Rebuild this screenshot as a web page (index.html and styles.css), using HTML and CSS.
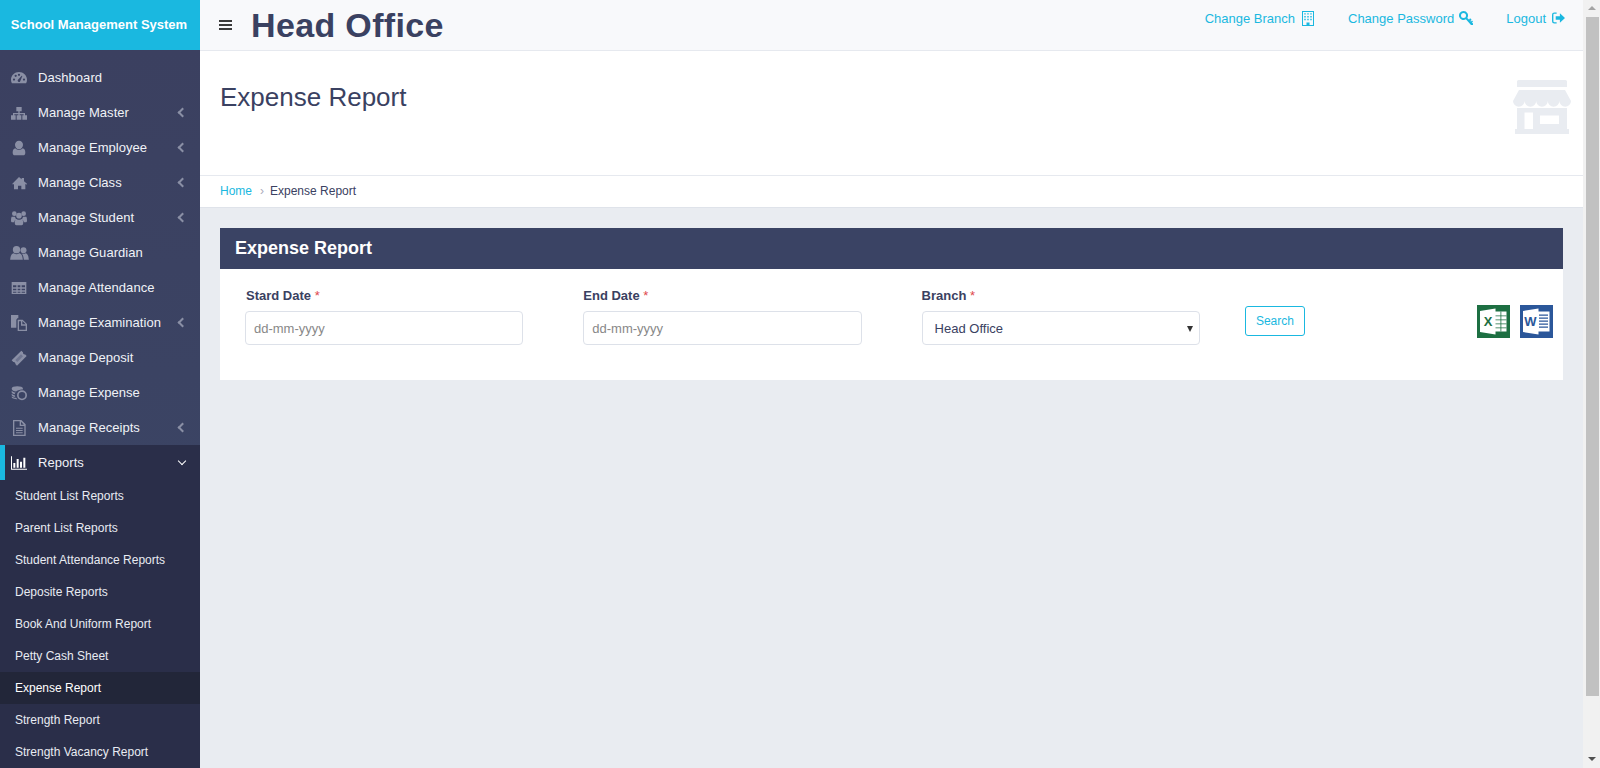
FILE: index.html
```html
<!DOCTYPE html>
<html lang="en">
<head>
    <meta charset="UTF-8">
    <meta name="viewport" content="width=device-width, initial-scale=1.0">
    <title>Expense Report</title>
    <link rel="stylesheet" href="styles.css">
</head>
<body>
    <aside class="sidebar">
        <div class="logo">School Management System</div>
        <ul class="menu">
            <li class="menu-item">
                <svg class="menu-icon" viewBox="0 0 24 24"><path fill-rule="evenodd" d="M12 3C5.600 3 0 8 0 14.500c0 2 .5 3.800 1.400 5.200.2.300.5.300.8.300h19.600c.3 0 .6 0 .8-.3.900-1.400 1.400-3.200 1.400-5.200C24 8 18.400 3 12 3zM4.500 16a1.700 1.700 0 1 1 0-3.400 1.700 1.700 0 0 1 0 3.400zm2.500-5.500a1.700 1.700 0 1 1 0-3.400 1.700 1.700 0 0 1 0 3.400zM12 9a1.700 1.700 0 1 1 0-3.400A1.700 1.700 0 0 1 12 9zm1.500 8.500a2.200 2.200 0 0 1-3.400-2.400l6-6.500.9.500zM19.500 16a1.700 1.700 0 1 1 0-3.400 1.700 1.700 0 0 1 0 3.400z"/></svg>
                <span class="menu-text">Dashboard</span>
            </li>
            <li class="menu-item">
                <svg class="menu-icon" viewBox="0 0 24 24"><path d="M8 3h8v6.500H8zM0 15.500h7V22H0zM8.500 15.500h7V22h-7zM17 15.500h7V22h-7zM11 9h2v3h8v4h-2v-2h-6v2h-2v-2H5v2H3v-4h8z"/></svg>
                <span class="menu-text">Manage Master</span>
                <span class="angle-left"></span>
            </li>
            <li class="menu-item">
                <svg class="menu-icon" viewBox="0 0 24 24"><path d="M12 1a6 6 0 0 1 6 6.500c0 3.300-2.700 6.500-6 6.500s-6-3.200-6-6.500A6 6 0 0 1 12 1zM6.500 12.500C8 14 10 15 12 15s4-1 5.500-2.500c2.500.3 4 2.500 4 6.500 0 2.500-1.300 4-3.300 4H5.800c-2 0-3.300-1.500-3.300-4 0-4 1.500-6.200 4-6.500z"/></svg>
                <span class="menu-text">Manage Employee</span>
                <span class="angle-left"></span>
            </li>
            <li class="menu-item">
                <svg class="menu-icon" viewBox="0 0 24 24"><path d="M12 3l4 3.500V4.500h3.500v5l4.500 3.800-1 1.200-1.500-1.200V21.500h-6v-5.500h-5v5.500h-6V13.300L3 14.500l-1-1.200z"/></svg>
                <span class="menu-text">Manage Class</span>
                <span class="angle-left"></span>
            </li>
            <li class="menu-item">
                <svg class="menu-icon" viewBox="0 0 24 24"><circle cx="5" cy="5.500" r="3.500"/><circle cx="19" cy="5.500" r="3.500"/><circle cx="12" cy="8.500" r="4.200"/><path d="M1 10h5c.3 1.800 1 3 2 4C6 15 5 16.500 5 18.500H2c-1 0-2-.8-2-2.300 0-2.500.2-5.200 1-6.200zM23 10h-5c-.3 1.800-1 3-2 4 2 1 3 2.500 3 4.500h3c1 0 2-.8 2-2.300 0-2.500-.2-5.200-1-6.200zM8.500 13.500c1 .9 2.200 1.300 3.500 1.300s2.500-.4 3.500-1.300c2.300.3 2.800 3.500 2.800 6.500 0 1.500-1 3-2.500 3H8.200c-1.500 0-2.500-1.500-2.500-3 0-3 .5-6.200 2.800-6.500z"/></svg>
                <span class="menu-text">Manage Student</span>
                <span class="angle-left"></span>
            </li>
            <li class="menu-item">
                <svg class="menu-icon menu-icon-wide" viewBox="0 0 28 24"><circle cx="9.500" cy="7" r="5.500"/><circle cx="20" cy="8" r="4.500"/><path d="M5.500 12.500c1 .9 2.500 1.500 4 1.500s3-.6 4-1.500c3 .3 5 3 5.500 9.500H0c.5-6.500 2.500-9.200 5.500-9.500zM17 12.300c.9.600 2 .9 3 .9s2.100-.3 3-.9c2.800.4 4.500 3.300 5 9.700h-7.500c-.3-4-1.500-7.700-3.500-9.700z"/></svg>
                <span class="menu-text">Manage Guardian</span>
            </li>
            <li class="menu-item">
                <svg class="menu-icon" viewBox="0 0 24 24"><path fill-rule="evenodd" d="M1 3h22v18H1zM3 8v3h5V8zm7 0v3h4V8zm6 0v3h5V8zM3 13v2.500h5V13zm7 0v2.500h4V13zm6 0v2.500h5V13zM3 17.500V19h5v-1.500zm7 0V19h4v-1.500zm6 0V19h5v-1.500z"/></svg>
                <span class="menu-text">Manage Attendance</span>
            </li>
            <li class="menu-item">
                <svg class="menu-icon" viewBox="0 0 24 24"><path fill-rule="evenodd" d="M0 0h11v5H9.500L8 7V19H0zM10 7h7.500l6.500 6.500V24H10zM17 9v5h5zM12 9.500V22h10v-6h-7V9.500z"/></svg>
                <span class="menu-text">Manage Examination</span>
                <span class="angle-left"></span>
            </li>
            <li class="menu-item">
                <svg class="menu-icon" viewBox="0 0 24 24"><path d="M15.500 1l2.500 2.500a2.500 2.500 0 0 0 3 3L23.500 9 9 23.500 6.500 21a2.500 2.500 0 0 0-3-3L1 15.500z"/><path class="ticket-band" d="M15 6.500l-8.500 8.500 3 3 8.500-8.500z"/></svg>
                <span class="menu-text">Manage Deposit</span>
            </li>
            <li class="menu-item">
                <svg class="menu-icon" viewBox="0 0 24 24"><path fill-rule="evenodd" d="M9.500 2C14 2 18 3.200 18 5.500c0 .5-.2.900-.5 1.300-3.500-.5-8 1.200-9.800 3C4.500 9.500 1 8 1 5.500 1 3.200 5 2 9.500 2zM1 8.500c1.500 1.600 4 2.500 6 2.800-.7.800-1.200 1.700-1.300 2.600-2-.3-4.700-1.300-4.700-3zM1 13c1 1.200 3 2 4.600 2.300.1 1 .4 1.800.9 2.700C3.800 17.800 1 17 1 15zM1 17.300c1.200 1 3.500 1.800 6.500 2 .7.800 1.500 1.500 2.300 2-.1 0-.2 0-.3 0C5 21.300 1 20 1 18zM16.500 8a7.500 7.500 0 1 1 0 15 7.500 7.500 0 0 1 0-15zm0 2.500a5 5 0 1 0 0 10 5 5 0 0 0 0-10z"/></svg>
                <span class="menu-text">Manage Expense</span>
            </li>
            <li class="menu-item">
                <svg class="menu-icon" viewBox="0 0 24 24"><path fill-rule="evenodd" d="M3 0h12.500L22 6.500V24H3zM5 2v20h15V9h-7V2zm10 .8V7h4.200zM7.500 11.500h10V13h-10zM7.500 15h10v1.500h-10zM7.500 18.500h10V20h-10z"/></svg>
                <span class="menu-text">Manage Receipts</span>
                <span class="angle-left"></span>
            </li>
            <li class="menu-item menu-item-open">
                <svg class="menu-icon menu-icon-active" viewBox="0 0 24 24"><path d="M0 2h1.500v18.500H24V22H0zM3.500 12h3v7h-3zM8.500 6h3v13h-3zM13.500 10h3v9h-3zM18.500 4h3v15h-3z"/></svg>
                <span class="menu-text">Reports</span>
                <span class="angle-down"></span>
            </li>
        </ul>
        <ul class="submenu">
            <li class="submenu-item">Student List Reports</li>
            <li class="submenu-item">Parent List Reports</li>
            <li class="submenu-item">Student Attendance Reports</li>
            <li class="submenu-item">Deposite Reports</li>
            <li class="submenu-item">Book And Uniform Report</li>
            <li class="submenu-item">Petty Cash Sheet</li>
            <li class="submenu-item submenu-item-active">Expense Report</li>
            <li class="submenu-item">Strength Report</li>
            <li class="submenu-item">Strength Vacancy Report</li>
        </ul>
    </aside>

    <div class="main">
        <header class="topbar">
            <div class="hamburger"><span></span><span></span><span></span></div>
            <div class="branch-name">Head Office</div>
            <nav class="top-links">
                <a class="top-link top-link-branch">Change Branch
                    <svg class="top-icon icon-building" viewBox="0 0 12 15"><path fill-rule="evenodd" d="M0 0h12v15H0zM1 1v13h3.500v-2.500h3V14H11V1zM2.300 2.200h1.400v1.400H2.300zm3 0h1.400v1.400H5.300zm3 0h1.400v1.400H8.300zM2.300 5h1.400v1.400H2.300zm3 0h1.400v1.400H5.300zm3 0h1.400v1.400H8.300zM2.300 7.800h1.400v1.400H2.300zm3 0h1.400v1.400H5.300zm3 0h1.400v1.400H8.300z"/></svg>
                </a>
                <a class="top-link top-link-password">Change Password
                    <svg class="top-icon icon-key" viewBox="0 0 14 14"><path fill-rule="evenodd" d="M4.500 0a4.500 4.500 0 0 1 3.800 6.900L14 12.600V14h-2L6.900 8.300A4.500 4.500 0 1 1 4.500 0zm0 2a2.500 2.500 0 1 0 0 5 2.500 2.500 0 0 0 0-5zM10 8.500l1.200-1.200 1.400 1.400-1.200 1.200zM12 10.500l1-1 1 1-1 1z"/></svg>
                </a>
                <a class="top-link top-link-logout">Logout
                    <svg class="top-icon icon-logout" viewBox="0 0 14 12"><path d="M5 0v1.500H2.500C2 1.500 1.500 2 1.500 2.500v7c0 .5.5 1 1 1H5V12H2.500A2.500 2.500 0 0 1 0 9.500v-7A2.500 2.500 0 0 1 2.500 0zM8.500 1L14 6l-5.500 5V8H4V4h4.500z"/></svg>
                </a>
            </nav>
        </header>

        <section class="page-head">
            <h1 class="page-title">Expense Report</h1>
            <svg class="store-icon" viewBox="0 0 58 54"><path fill-rule="evenodd" d="M5.500 0h47A1.500 1.500 0 0 1 54 1.500V7H4V1.500A1.500 1.500 0 0 1 5.500 0zM6 10h46l6 11a5.800 5.800 0 0 1-11.600 0 5.800 5.800 0 0 1-11.600 0 5.800 5.800 0 0 1-11.600 0 5.800 5.800 0 0 1-11.600 0A5.800 5.800 0 0 1 0 21zM4 28h50v21h2v5H2v-5h2zM11.500 32.500V49H20V32.500zM27 35.500V44h19v-8.500z"/></svg>
        </section>

        <div class="breadcrumb">
            <a class="crumb-link">Home</a>
            <span class="crumb-sep">›</span>
            <span class="crumb-current">Expense Report</span>
        </div>

        <div class="content">
            <div class="card">
                <div class="card-header">Expense Report</div>
                <div class="card-body">
                    <div class="field">
                        <label class="field-label">Stard Date <span class="required">*</span></label>
                        <input class="field-input" type="text" placeholder="dd-mm-yyyy">
                    </div>
                    <div class="field">
                        <label class="field-label">End Date <span class="required">*</span></label>
                        <input class="field-input" type="text" placeholder="dd-mm-yyyy">
                    </div>
                    <div class="field">
                        <label class="field-label">Branch <span class="required">*</span></label>
                        <div class="select-wrap">
                            <select class="field-input field-select">
                                <option>Head Office</option>
                            </select>
                        </div>
                    </div>
                    <button class="search-btn">Search</button>
                    <div class="export-icons">
                        <svg class="export-icon" viewBox="0 0 33 33">
                            <rect width="33" height="33" fill="#1d6f42"/>
                            <path d="M18 6.500h11.500v20H18z" fill="#fff"/>
                            <path d="M18 10.500h11.500v.8H18zM18 14.500h11.500v.8H18zM18 18.500h11.500v.8H18zM18 22.500h11.500v.8H18zM23.500 6.500h.8v20h-.8z" fill="#1d6f42"/>
                            <path d="M3 6L18.500 3.500v26L3 27z" fill="#fff"/>
                            <text x="11" y="21" class="export-letter" fill="#1d6f42">X</text>
                        </svg>
                        <svg class="export-icon" viewBox="0 0 33 33">
                            <rect width="33" height="33" fill="#2b579a"/>
                            <path d="M18 6.500h11.500v20H18z" fill="#fff"/>
                            <path d="M19 9.500h9v1.300h-9zM19 12.500h9v1.300h-9zM19 15.500h9v1.300h-9zM19 18.500h9v1.300h-9zM19 21.500h9v1.300h-9z" fill="#2b579a"/>
                            <path d="M3 6L18.500 3.500v26L3 27z" fill="#fff"/>
                            <text x="10.500" y="21" class="export-letter" fill="#2b579a">W</text>
                        </svg>
                    </div>
                </div>
            </div>
        </div>
    </div>

    <div class="scrollbar">
        <span class="scroll-up"></span>
        <div class="scroll-thumb"></div>
        <span class="scroll-down"></span>
    </div>
</body>
</html>
```

FILE: styles.css
```css
html {
    overflow: hidden;
}
body {
    margin: 0;
    display: flex;
    height: 768px;
    overflow: hidden;
    font-family: "Liberation Sans", Arial, sans-serif;
    font-size: 13px;
    color: #3a4161;
    background: #e9ecf1;
}
ul {
    list-style: none;
    margin: 0;
    padding: 0;
}

/* sidebar */
.sidebar {
    width: 200px;
    flex-shrink: 0;
    background: #2a2e49;
}
.logo {
    height: 50px;
    line-height: 50px;
    padding-right: 2px;
    box-sizing: border-box;
    background: #1ab8e0;
    color: #fff;
    font-size: 13px;
    font-weight: bold;
    text-align: center;
}
.menu {
    padding-top: 10px;
    background: linear-gradient(#3b4060, #3b4464);
}
.menu-item {
    display: flex;
    align-items: center;
    height: 35px;
    padding-left: 11px;
    color: #f0f2f7;
    box-sizing: border-box;
}
.menu-icon {
    width: 16px;
    height: 16px;
    margin-right: 11px;
    fill: #8a8fa5;
    flex-shrink: 0;
}
.menu-icon-wide {
    width: 19px;
    margin-right: 9px;
    margin-left: -1px;
}
.menu-icon-active {
    fill: #fff;
}
.ticket-band {
    fill: #6f7590;
}
.menu-text {
    letter-spacing: 0.05px;
}
.angle-left,
.angle-down {
    width: 5px;
    height: 5px;
    margin-left: auto;
    margin-right: 14px;
    border-left: 2px solid #8a8fa5;
    border-bottom: 2px solid #8a8fa5;
}
.angle-left {
    transform: rotate(45deg);
}
.angle-down {
    margin-right: 15px;
    border-left-width: 1.5px;
    border-bottom-width: 1.5px;
    border-color: #fff;
    transform: translateY(-2px) rotate(-45deg);
}
.menu-item-open {
    background: #2a2e49;
    border-left: 5px solid #1ab8e0;
    padding-left: 6px;
}
.submenu-item {
    height: 32px;
    line-height: 32px;
    padding-left: 15px;
    font-size: 12px;
    color: #e8ebf2;
}
.submenu-item-active {
    background: #222639;
    color: #fff;
}

/* main area */
.main {
    flex: 1;
    min-width: 0;
}
.topbar {
    display: flex;
    align-items: center;
    height: 50px;
    padding-left: 19px;
    background: #f8f9fb;
    border-bottom: 1px solid #e6e9ef;
}
.hamburger {
    display: flex;
    flex-direction: column;
    gap: 2px;
    width: 13px;
    margin-right: 19px;
}
.hamburger span {
    height: 2px;
    background: #3a3a3a;
}
.branch-name {
    font-size: 34px;
    font-weight: bold;
    line-height: 50px;
    letter-spacing: 0.35px;
}
.top-links {
    display: flex;
    align-self: flex-start;
    gap: 33px;
    margin-left: auto;
    padding-top: 9px;
    padding-right: 18px;
}
.top-link {
    display: flex;
    align-items: center;
    gap: 7px;
    height: 18px;
    color: #1ab8e0;
}
.top-link-branch {
    margin-right: 1px;
}
.top-link-password {
    gap: 5px;
}
.top-link-logout {
    gap: 6px;
}
.top-icon {
    fill: #1ab8e0;
}
.icon-building {
    width: 12px;
    height: 15px;
}
.icon-key {
    width: 14px;
    height: 14px;
}
.icon-logout {
    width: 13px;
    height: 12px;
}
.page-head {
    display: flex;
    justify-content: space-between;
    height: 124px;
    padding: 0 12px 0 20px;
    background: #fff;
    border-bottom: 1px solid #e6e9ef;
}
.page-title {
    margin: 29px 0 0;
    font-size: 26px;
    font-weight: normal;
    line-height: 34px;
}
.store-icon {
    width: 58px;
    height: 54px;
    margin-top: 29px;
    fill: #e9ecf1;
}
.breadcrumb {
    display: flex;
    align-items: center;
    height: 30px;
    padding: 0 0 1px 20px;
    background: #fff;
    border-bottom: 1px solid #dfe3ea;
    font-size: 12px;
}
.crumb-link {
    color: #1ab8e0;
}
.crumb-sep {
    margin: 0 6px 0 8px;
    color: #aab;
}
.content {
    padding: 20px;
}

/* card */
.card {
    background: #fff;
}
.card-header {
    height: 41px;
    line-height: 41px;
    padding-left: 15px;
    background: #3a4364;
    color: #fff;
    font-size: 18px;
    font-weight: bold;
}
.card-body {
    display: flex;
    align-items: flex-start;
    gap: 60px;
    padding: 16px 10px 35px 25px;
}
.field {
    width: 278.3px;
}
.field-label {
    display: block;
    height: 20px;
    line-height: 21px;
    margin-bottom: 6px;
    font-weight: bold;
}
.field:first-child .field-label {
    padding-left: 1px;
}
.required {
    color: #e0474c;
    font-weight: normal;
}
.field-input {
    display: block;
    width: 100%;
    height: 34px;
    box-sizing: border-box;
    padding: 0 8px;
    border: 1px solid #dde1e9;
    border-radius: 4px;
    background: #fff;
    font-family: inherit;
    font-size: 13px;
    color: #3a4161;
}
.field-input::placeholder {
    color: #888;
}
.select-wrap {
    position: relative;
}
.select-wrap::after {
    content: "";
    position: absolute;
    top: 15px;
    right: 7px;
    border-left: 3.500px solid transparent;
    border-right: 3.500px solid transparent;
    border-top: 6px solid #333;
}
.field-select {
    appearance: none;
    padding-left: 12px;
}
.search-btn {
    width: 60px;
    height: 30px;
    margin: 21px 0 0 -15px;
    padding: 0;
    border: 1px solid #1ab8e0;
    border-radius: 3px;
    background: #fff;
    color: #1ab8e0;
    font-family: inherit;
    font-size: 12px;
}
.export-icons {
    display: flex;
    gap: 10px;
    margin: 20px 0 0 auto;
}
.export-icon {
    width: 33px;
    height: 33px;
}
.export-letter {
    font-size: 13px;
    font-weight: bold;
    text-anchor: middle;
}

/* page scrollbar */
.scrollbar {
    display: flex;
    flex-direction: column;
    align-items: center;
    width: 17px;
    flex-shrink: 0;
    background: #f1f1f1;
}
.scroll-up,
.scroll-down {
    width: 0;
    height: 0;
    border-left: 4px solid transparent;
    border-right: 4px solid transparent;
}
.scroll-up {
    margin-top: 6px;
    margin-bottom: 7px;
    border-bottom: 4px solid #a3a3a3;
}
.scroll-down {
    margin-top: 61px;
    border-top: 4px solid #505050;
}
.scroll-thumb {
    width: 13px;
    height: 679px;
    margin-left: 1px;
    background: #c1c1c1;
}
```
